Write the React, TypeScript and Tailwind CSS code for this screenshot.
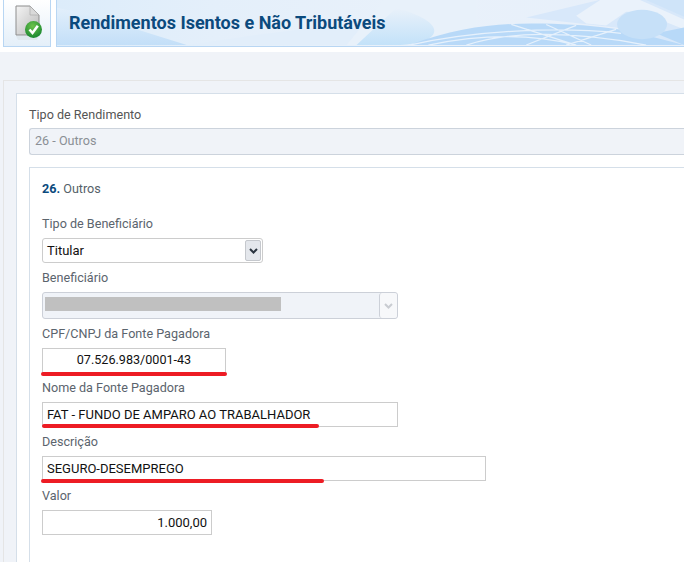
const font = { fontFamily: "Roboto, sans-serif" };

function DocIcon() {
	return (
		<svg width="28" height="36" viewBox="0 0 28 36">
			<defs>
				<linearGradient id="doc" x1="0" y1="0" x2="1" y2="1">
					<stop offset="0" stopColor="#f4f4f4" />
					<stop offset="1" stopColor="#b9b9b9" />
				</linearGradient>
				<radialGradient id="ok" cx="0.45" cy="0.3" r="0.8">
					<stop offset="0" stopColor="#6cc24a" />
					<stop offset="1" stopColor="#0d7f2c" />
				</radialGradient>
			</defs>
			<path d="M1 1H15L24 10V30H1Z" fill="url(#doc)" stroke="#8d8d8d" strokeWidth="1" />
			<path d="M15 1L24 10H15Z" fill="#d9d9d9" stroke="#a5a5a5" strokeWidth="0.6" />
			<path d="M1 31H24L22 35H3Z" fill="#dfe8ee" />
			<circle cx="18.500" cy="24.500" r="8.500" fill="url(#ok)" />
			<path d="M14.500 24.500L17.500 28L22.800 20.800" fill="none" stroke="#fff" strokeWidth="2.600" />
		</svg>
	);
}

function BannerArt() {
	return (
		<svg className="absolute inset-0 h-full w-full" viewBox="0 0 628 47" preserveAspectRatio="none">
			<defs>
				<linearGradient id="bn" x1="0" y1="0" x2="1" y2="0">
					<stop offset="0" stopColor="#dcecfa" />
					<stop offset="0.25" stopColor="#e4effa" />
					<stop offset="0.6" stopColor="#e9f1fa" />
					<stop offset="1" stopColor="#e6effa" />
				</linearGradient>
				<linearGradient id="lft" x1="0" y1="0" x2="0" y2="1">
					<stop offset="0" stopColor="#e2effb" />
					<stop offset="1" stopColor="#c3dff8" />
				</linearGradient>
				<linearGradient id="low" x1="0" y1="0" x2="0" y2="1">
					<stop offset="0" stopColor="#e9f1fa" />
					<stop offset="1" stopColor="#c3e2f9" />
				</linearGradient>
			</defs>
			<rect width="628" height="47" fill="url(#bn)" />
			<path d="M0 8C40 16 85 32 130 46H0Z" fill="url(#lft)" />
			<path d="M130 46C200 36 250 26 340 24V46Z" fill="#e2eefa" />
			<path d="M290 46L327 0H420V46Z" fill="#e8f1fa" />
			<path d="M340 8C400 26 380 46 340 46H300Z" fill="url(#low)" />
			<path d="M353 46C400 28 440 24 476 24C530 24 585 30 628 46Z" fill="#b8d9f8" />
			<path d="M372 46C420 36 470 33 520 46M410 46C450 33 510 30 590 46M353 46C420 31 500 27 565 34M455 25L520 46M490 25L535 46M520 26L470 46M560 30L510 46" fill="none" stroke="#e6f1fc" strokeWidth="1.300" />
			<path d="M470 18L543 0H628V46L560 28Z" fill="#d8e8fa" />
			<path d="M544 0H584L628 20V30L584 12H570L550 26L530 24L520 16Z" fill="#eaf2fb" />
			<path d="M628 0V17L590 0Z" fill="#cfe4f9" />
			<path d="M628 28V46L600 34Z" fill="#b8d9f8" />
			<ellipse cx="586" cy="25" rx="25" ry="15" fill="#c6e0f8" />
		</svg>
	);
}

function Label({ children }: { children: string }) {
	return <div className="h-[18px] text-[12.6px] leading-[18px] text-[#5b646d]">{children}</div>;
}

function Field({ value, width, align, size, underline }: { value: string; width: string; align: string; size: string; underline: string }) {
	return (
		<div className="relative mb-[6px] mt-[5px]">
			<div className={`flex h-[25px] items-center border border-[#ccc] bg-white px-1 text-[#111] ${width} ${align} ${size}`}>{value}</div>
			{underline && <div className={`absolute h-1 rounded-full bg-[#ed1c24] ${underline}`} />}
		</div>
	);
}

export default function App() {
	return (
		<div className="h-[562px] w-[684px] overflow-hidden bg-white" style={font}>
			<header className="flex h-[52px] gap-[5px] pl-[3px]">
				<div className="flex h-[47px] w-[48px] items-center justify-center border-x border-b border-[#b8d6f3] bg-gradient-to-b from-white to-[#e4eff9] pl-[3px]">
					<DocIcon />
				</div>
				<div className="relative h-[47px] flex-1 border-b border-l border-[#b8d6f3]">
					<BannerArt />
					<h1 className="absolute left-[12px] top-[13px] whitespace-nowrap text-[18px] leading-[20px] font-bold text-[#0b4a7d]">Rendimentos Isentos e Não Tributáveis</h1>
				</div>
			</header>
			<main className="h-[510px] bg-[#f0f3f8] pl-[3px] pt-[28px]">
				<div className="h-full border-l border-t border-[#e5e5e5] pl-[12px] pt-[12px]">
					<section className="h-full border-l border-t border-[#d5dfe9] bg-white pl-[12px] pt-[12px]">
						<div className="h-[22px] text-[12.6px] leading-[18px] text-[#555]">Tipo de Rendimento</div>
						<div className="flex h-[27px] items-center rounded-l-[3px] border border-r-0 border-[#ccd3dc] bg-[#f0f3f8] pl-[5px] text-[12.6px] text-[#8a8f95]">26 - Outros</div>
						<div className="mt-[12px] h-full border-l border-t border-[#d5dfe9] pl-[12px] pt-[12px]">
							<div className="h-[35px] text-[12.6px] leading-[18px] text-[#555f69]">
								<b className="text-[#0b4a7d]">26.</b> Outros
							</div>
							<Label>Tipo de Beneficiário</Label>
							<div className="mb-[6px] mt-[5px] flex h-[25px] w-[221px] items-center justify-between rounded-[3px] border border-[#ccc] bg-white pl-1 pr-px text-[13px] text-[#111]">
								Titular
								<span className="flex h-[21px] w-[16px] items-center justify-center rounded-[2px] border border-[#c5c8cd] bg-[#e4e7ec]">
									<svg width="9" height="6" viewBox="0 0 9 6">
										<path d="M1 1L4.500 4.500L8 1" fill="none" stroke="#2b3540" strokeWidth="2" />
									</svg>
								</span>
							</div>
							<Label>Beneficiário</Label>
							<div className="mb-[6px] mt-[5px] flex h-[27px] w-[356px] rounded-[3px] border border-[#ccd0d8] bg-[#f0f3f8]">
								<div className="ml-[2px] mt-[4px] h-[14px] w-[236px] bg-[#c0c0c0]" />
								<span className="ml-auto flex w-[18px] items-center justify-center rounded-[3px] border-l border-[#ccd0d8] bg-[#f7f8fa]">
									<svg width="9" height="6" viewBox="0 0 9 6">
										<path d="M1 1L4.500 4.500L8 1" fill="none" stroke="#c9ccd1" strokeWidth="2" />
									</svg>
								</span>
							</div>
							<Label>CPF/CNPJ da Fonte Pagadora</Label>
							<Field value="07.526.983/0001-43" width="w-[184px]" align="justify-center" size="text-[12.6px]" underline="-left-px top-[24px] w-[186px]" />
							<Label>Nome da Fonte Pagadora</Label>
							<Field value="FAT - FUNDO DE AMPARO AO TRABALHADOR" width="w-[356px]" align="justify-start" size="text-[13px]" underline="left-0 top-[22px] w-[277px]" />
							<Label>Descrição</Label>
							<Field value="SEGURO-DESEMPREGO" width="w-[444px]" align="justify-start" size="text-[13px]" underline="-left-px top-[23px] w-[283px]" />
							<Label>Valor</Label>
							<Field value="1.000,00" width="w-[170px]" align="justify-end" size="text-[13px]" underline="" />
						</div>
					</section>
				</div>
			</main>
		</div>
	);
}
